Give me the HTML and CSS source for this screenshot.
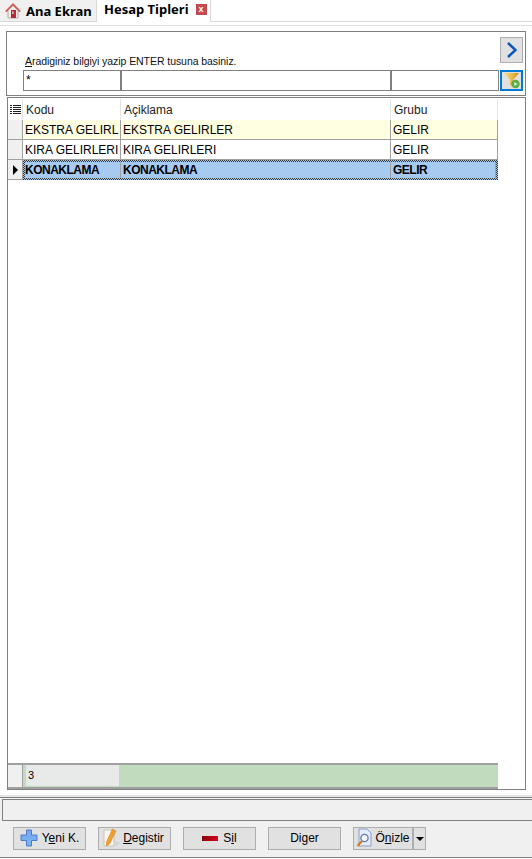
FILE: index.html
```html
<!DOCTYPE html>
<html lang="tr">
<head>
<meta charset="utf-8">
<title>Hesap Tipleri</title>
<link rel="stylesheet" href="styles.css">
</head>
<body>
<div class="tabs">
  <div class="tab tab-home">
    <svg class="home-icon" width="16" height="16" viewBox="0 0 16 16">
      <path d="M3 8 V15 H13 V8" fill="#f3ece6" stroke="#b9a9a0"/>
      <path d="M0.8 8.6 L8 1.5 L15.2 8.6" fill="none" stroke="#d0605c" stroke-width="2"/>
      <rect x="6" y="7" width="5" height="8" fill="#b52a38"/>
      <rect x="7.2" y="8.5" width="1.4" height="2.4" fill="#f6dcdc"/>
    </svg>
    <span>Ana Ekran</span>
  </div>
  <div class="tab tab-active">
    <span>Hesap Tipleri</span>
    <span class="close">x</span>
  </div>
  <div class="tab-rest"></div>
</div>
<div class="content">
  <section class="search">
    <div class="search-main">
      <div class="hint"><u>A</u>radiginiz bilgiyi yazip ENTER tusuna basiniz.</div>
      <div class="filters">
        <div class="filter f-kod">*</div>
        <div class="filter f-aciklama"></div>
        <div class="filter f-grup"></div>
      </div>
    </div>
    <div class="search-side">
      <button class="nav-btn" type="button" aria-label="İleri">
        <svg width="14" height="18" viewBox="0 0 14 18"><path d="M3 2 L10.5 9 L3 16" fill="none" stroke="#0b55b8" stroke-width="2.4"/></svg>
      </button>
      <button class="filter-btn" type="button" aria-label="Filtre">
        <svg width="18" height="17" viewBox="0 0 18 17">
          <defs><linearGradient id="fn" x1="0" x2="1" y1="0" y2="0"><stop offset="0" stop-color="#f6dc8a"/><stop offset="0.6" stop-color="#e8b440"/><stop offset="1" stop-color="#c88a20"/></linearGradient></defs>
          <path d="M1 1 H16 L10.5 7.5 V15 L7 13 V7.5 Z" fill="url(#fn)"/>
          <circle cx="12.5" cy="12" r="4.2" fill="#5aae4a"/>
          <path d="M11.3 10 L14.6 12 L11.3 14 Z" fill="#e8f5e0"/>
        </svg>
      </button>
    </div>
  </section>
  <section class="grid">
    <div class="grid-inner">
      <div class="row head">
        <div class="ind ind-head">
          <svg width="11" height="10" viewBox="0 0 11 10"><path d="M0 .5h2M3 .5h8M0 2.5h2M3 2.5h8M0 4.5h2M3 4.5h8M0 6.5h2M3 6.5h8M0 8.5h2M3 8.5h8" stroke="#222" stroke-width="1"/></svg>
        </div>
        <div class="cell c1">Kodu</div>
        <div class="cell c2">Açiklama</div>
        <div class="cell c3">Grubu</div>
      </div>
      <div class="row data odd">
        <div class="ind"></div>
        <div class="cell c1">EKSTRA GELIRL</div>
        <div class="cell c2">EKSTRA GELIRLER</div>
        <div class="cell c3">GELIR</div>
      </div>
      <div class="row data">
        <div class="ind"></div>
        <div class="cell c1">KIRA GELIRLERI</div>
        <div class="cell c2">KIRA GELIRLERI</div>
        <div class="cell c3">GELIR</div>
      </div>
      <div class="row data selected">
        <div class="ind"><span class="arrow"></span></div>
        <div class="sel-cells">
          <div class="cell c1">KONAKLAMA</div>
          <div class="cell c2">KONAKLAMA</div>
          <div class="cell c3">GELIR</div>
        </div>
      </div>
      <div class="grid-space"></div>
      <div class="row foot">
        <div class="ind"></div>
        <div class="foot-bar"><div class="count">3</div></div>
      </div>
    </div>
  </section>
</div>
<div class="bottom">
  <div class="status"></div>
  <div class="actions">
    <button class="btn b-new" type="button">
      <svg width="18" height="18" viewBox="0 0 18 18">
        <defs><linearGradient id="pl" x1="0" x2="0" y1="0" y2="1"><stop offset="0" stop-color="#7da4ee"/><stop offset="1" stop-color="#70b8f4"/></linearGradient></defs>
        <path d="M6.5 1 H11.5 V6 H17 V11.5 H11.5 V17 H6.5 V11.5 H1 V6 H6.5 Z" fill="url(#pl)" stroke="#5078c8"/>
      </svg>
      <span>Y<u>e</u>ni K.</span>
    </button>
    <button class="btn b-edit" type="button">
      <svg width="18" height="20" viewBox="0 0 18 20">
        <path d="M1 2 H11 V18 H1 Z" fill="#f8f6ee" stroke="#c8c4b8"/>
        <path d="M9.5 1 L13 3 L6.5 16 L3.5 18 L3.5 14 Z" fill="#f0a030" stroke="#d08020" stroke-width="0.6"/>
        <path d="M12 19 L17 15 L12 13 Z" fill="#d4d4d4"/>
      </svg>
      <span><u>D</u>egistir</span>
    </button>
    <button class="btn b-del" type="button">
      <span class="minus"></span>
      <span>S<u>i</u>l</span>
    </button>
    <button class="btn b-other" type="button"><span>Di<u>g</u>er</span></button>
    <div class="split">
      <button class="btn b-prev" type="button">
        <svg width="16" height="20" viewBox="0 0 16 20">
          <path d="M3 1 H11 L15 5 V18 H3 Z" fill="#e4ecf8" stroke="#8a9cc8"/>
          <circle cx="8.5" cy="10" r="3.6" fill="#f4f8ff" stroke="#5c78b0" stroke-width="1.3"/>
          <path d="M6 13 L1.5 18" stroke="#d07820" stroke-width="2"/>
        </svg>
        <span>Ö<u>n</u>izle</span>
      </button>
      <button class="caret-btn" type="button" aria-label="Menü"><span class="caret"></span></button>
    </div>
  </div>
</div>
</body>
</html>
```
FILE: styles.css
```css
* { box-sizing: border-box; }
html, body { margin: 0; padding: 0; }
body {
  width: 532px;
  height: 859px;
  background: #fff;
  overflow: hidden;
  font-family: "Liberation Sans", Arial, sans-serif;
  font-size: 12px;
  color: #000;
  display: flex;
  flex-direction: column;
}
.tabs { display: flex; height: 22px; flex: none; }
.tab {
  display: flex;
  align-items: center;
  font: bold 13px "Noto Sans", sans-serif;
  white-space: nowrap;
}
.tab-home {
  width: 97px;
  background: #f0f0f0;
  border: 1px solid #d9d9d9;
  border-width: 0 1px 1px 0;
  padding: 1px 0 0 5px;
  gap: 5px;
}
.home-icon { flex: none; }
.tab-active {
  width: 114px;
  background: #fff;
  border-right: 1px solid #d9d9d9;
  padding: 0 0 5px 7px;
  gap: 7px;
}
.close {
  width: 11px; height: 11px;
  margin-top: 2px;
  background: #c34a50;
  color: #fff;
  font: bold 9px/10px "Liberation Sans", sans-serif;
  text-align: center;
}
.tab-rest { flex: 1; border-bottom: 1px solid #d9d9d9; }
.content {
  flex: 1;
  min-height: 0;
  margin-top: 3px;
  padding: 5px 5px 5px 6px;
  border-top: 1px solid #e0e0e0;
  border-bottom: 2px solid #e4e4e4;
  display: flex;
  flex-direction: column;
  gap: 1px;
}
.search {
  height: 65px;
  flex: none;
  border: 1px solid #808080;
  display: flex;
  padding: 0 2px 4px 16px;
  width: 520px;
}
.search-main { width: 476px; display: flex; flex-direction: column; justify-content: flex-end; }
.hint {
  font: 10.5px/14px "Liberation Sans", sans-serif;
  height: 16px;
  padding-left: 2px;
  letter-spacing: -0.06px;
  color: #111;
}
.filters { display: flex; height: 21px; border: 1px solid #808080; }
.filter { border-left: 2px solid #808080; font-size: 12px; line-height: 18px; padding-left: 2px; }
.f-kod { width: 96px; border-left: 0; padding-left: 2px; }
.f-aciklama { width: 270px; }
.f-grup { flex: 1; }
.search-side { flex: 1; display: flex; flex-direction: column; justify-content: flex-end; gap: 7px; align-items: flex-end; }
.nav-btn, .filter-btn { width: 23px; padding: 0; display: flex; align-items: center; justify-content: center; }
.nav-btn { height: 26px; background: #e1e1e1; border: 1px solid #adadad; }
.filter-btn { height: 21px; background: #e1e1e1; border: 2px solid #0078d7; }
.grid { flex: 1; min-height: 0; border: 1px solid #808080; padding: 1px 0 0 0; margin-left: 1px; width: 519px; }
.grid-inner { height: 100%; width: 490px; display: flex; flex-direction: column; }
.row { display: flex; flex: none; }
.ind {
  width: 15px;
  flex: none;
  background: #f0f0f0;
  border-right: 1px solid #a0a0a0;
  border-bottom: 1px solid #a0a0a0;
  display: flex;
  align-items: center;
  justify-content: center;
}
.cell {
  border-right: 1px solid #a0a0a0;
  border-bottom: 1px solid #a0a0a0;
  padding-left: 2px;
  font-size: 12px;
  line-height: 20px;
  white-space: nowrap;
  overflow: hidden;
}
.c1 { width: 98px; }
.c2 { width: 270px; }
.c3 { flex: 1; }
.head { height: 21px; }
.head .ind, .head .cell { background: #fff; border-color: #e3e3e3; }
.head .ind { border-bottom: 0; }
.head .cell { border-bottom: 0; padding-left: 3px; line-height: 22px; color: #222; }
.data { height: 20px; }
.odd .cell { background: #ffffe1; }
.sel-cells {
  flex: 1;
  display: flex;
  padding: 2px;
  background: repeating-conic-gradient(#333 0 25%, #a6caf0 0 50%) 0 0 / 2px 2px;
}
.selected .cell {
  background: #a6caf0;
  font-weight: bold;
  letter-spacing: -0.5px;
  border-bottom: 0;
  line-height: 16px;
}
.selected .c1 { width: 96px; padding-left: 0; }
.selected .c2 { width: 270px; }
.arrow { width: 0; height: 0; border-left: 5px solid #000; border-top: 5px solid transparent; border-bottom: 5px solid transparent; }
.grid-space { flex: 1; }
.foot { height: 26px; border-top: 2px solid #a0a0a0; }
.foot .ind { border-bottom: 2px solid #a0a0a0; }
.foot-bar { flex: 1; background: #c1dbbf; border-bottom: 2px solid #a0a0a0; padding: 0 0 1px 3px; }
.count { width: 93px; height: 21px; background: #e8eaea; padding-left: 2px; font-size: 11px; line-height: 21px; }
.bottom {
  flex: none;
  margin-bottom: 1px;
  background: #f0f0f0;
  border-top: 1px solid #808080;
  padding-top: 1px;
}
.status { height: 22px; margin-left: 2px; border: 1px solid #808080; border-right: 0; }
.actions {
  height: 37px;
  display: flex;
  align-items: flex-start;
  padding: 6px 0 0 13px;
  border-bottom: 1px solid #808080;
}
.btn {
  height: 23px;
  width: 73px;
  margin-right: 12px;
  padding: 0 0 1px;
  background: #e1e1e1;
  border: 1px solid #adadad;
  font: 12px "Liberation Sans", sans-serif;
  color: #000;
  display: flex;
  align-items: center;
  justify-content: center;
  gap: 4px;
}
.b-edit { gap: 2px; padding-right: 2px; }
.minus { width: 16px; height: 5px; background: linear-gradient(90deg, #8c0010, #d8001c); margin-right: 1px; }
.split { display: flex; }
.b-prev { width: 60px; margin: 0; gap: 3px; }
.caret-btn { width: 13px; height: 23px; background: #e1e1e1; border: 1px solid #adadad; padding: 0; display: flex; align-items: center; justify-content: center; }
.caret { width: 0; height: 0; border-top: 4px solid #000; border-left: 4px solid transparent; border-right: 4px solid transparent; }
```
